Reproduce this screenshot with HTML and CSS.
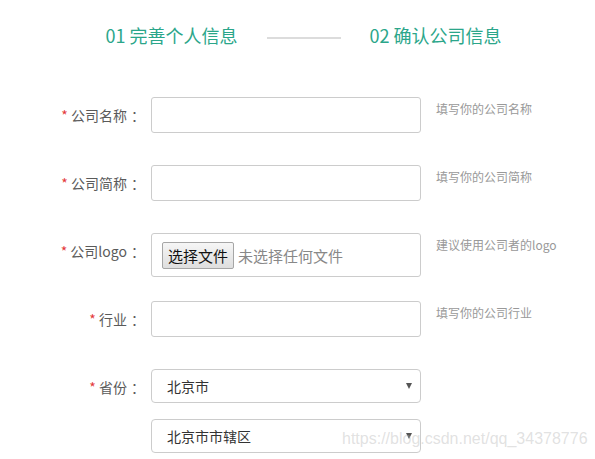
FILE: index.html
```html
<!DOCTYPE html>
<html lang="zh-CN">
<head>
<meta charset="utf-8">
<link rel="stylesheet" href="styles.css">
</head>
<body>
<div class="page">
  <div class="steps">
    <span class="step">01 完善个人信息</span>
    <span class="step-line"></span>
    <span class="step">02 确认公司信息</span>
  </div>
  <div class="form">
    <div class="row">
      <div class="label"><span class="req">*</span> 公司名称<span class="colon">：</span></div>
      <div class="input"></div>
      <div class="hint">填写你的公司名称</div>
    </div>
    <div class="row">
      <div class="label"><span class="req">*</span> 公司简称<span class="colon">：</span></div>
      <div class="input"></div>
      <div class="hint">填写你的公司简称</div>
    </div>
    <div class="row row-file">
      <div class="label"><span class="req">*</span> 公司logo<span class="colon">：</span></div>
      <div class="input file">
        <span class="file-btn">选择文件</span>
        <span class="file-none">未选择任何文件</span>
      </div>
      <div class="hint">建议使用公司者的logo</div>
    </div>
    <div class="row">
      <div class="label"><span class="req">*</span> 行业<span class="colon">：</span></div>
      <div class="input"></div>
      <div class="hint">填写你的公司行业</div>
    </div>
    <div class="row row-select">
      <div class="label"><span class="req">*</span> 省份<span class="colon">：</span></div>
      <div class="selects">
        <div class="select"><span>北京市</span><span class="arrow"></span></div>
        <div class="select"><span>北京市市辖区</span><span class="arrow"></span></div>
      </div>
    </div>
  </div>
  <div class="watermark">https://blog.csdn.net/qq_34378776</div>
</div>
</body>
</html>
```

FILE: styles.css
```css
html, body {
  margin: 0;
  padding: 0;
  background: #ffffff;
}
body {
  font-family: "Noto Sans CJK SC", "Noto Sans", sans-serif;
  width: 595px;
  height: 459px;
  overflow: hidden;
}
.page {
  position: relative;
  width: 595px;
  height: 459px;
}
.steps {
  display: flex;
  align-items: center;
  justify-content: center;
  gap: 29px;
  padding: 22px 0 0 12px;
  height: 26px;
  line-height: 26px;
}
.step {
  font-size: 18px;
  color: #2ba68a;
  white-space: nowrap;
}
.step-line {
  display: block;
  width: 74px;
  height: 2px;
  background: #dcdcdc;
  margin-top: 5px;
}
.form {
  padding-top: 49px;
}
.row {
  display: flex;
  align-items: flex-start;
  height: 36px;
  margin-bottom: 32px;
}
.row-file {
  height: 44px;
  margin-bottom: 24px;
}
.label {
  width: 145px;
  flex: none;
  text-align: right;
  font-size: 14px;
  line-height: 36px;
  color: #5a5a5a;
  white-space: nowrap;
}
.colon {
  margin-left: 4px;
}
.req {
  color: #e4393c;
}
.input {
  box-sizing: border-box;
  width: 270px;
  height: 36px;
  margin-left: 6px;
  border: 1px solid #cccccc;
  border-radius: 3px;
  flex: none;
}
.file {
  height: 44px;
  display: flex;
  align-items: center;
  padding-left: 10px;
}
.file-btn {
  box-sizing: border-box;
  height: 27px;
  padding: 0 5px;
  line-height: 25px;
  font-size: 15px;
  color: #111111;
  border: 1px solid #a6a6a6;
  border-radius: 2px;
  background: linear-gradient(#f6f6f6, #dedede);
}
.file-none {
  margin-left: 4px;
  font-size: 15px;
  color: #888888;
}
.hint {
  margin-left: 15px;
  margin-top: 3px;
  font-size: 12px;
  line-height: 18px;
  color: #999999;
  white-space: nowrap;
}
.selects {
  margin-left: 6px;
  display: flex;
  flex-direction: column;
  gap: 16px;
}
.select {
  box-sizing: border-box;
  width: 270px;
  height: 34px;
  border: 1px solid #cccccc;
  border-radius: 4px;
  display: flex;
  align-items: center;
  justify-content: space-between;
  padding: 0 8px 0 15px;
  font-size: 14px;
  color: #333333;
}
.arrow {
  width: 0;
  height: 0;
  border-left: 3px solid transparent;
  border-right: 3px solid transparent;
  border-top: 6px solid #555555;
}
.watermark {
  position: absolute;
  left: 342px;
  top: 429px;
  font-family: "Liberation Sans", Arial, sans-serif;
  font-size: 16px;
  line-height: 20px;
  color: rgba(180, 180, 180, 0.4);
  white-space: nowrap;
}
```
